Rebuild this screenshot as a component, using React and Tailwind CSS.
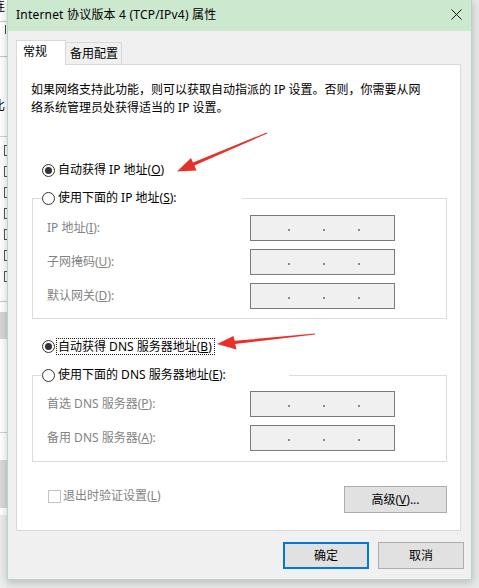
import React from "react";

const Radio = ({ checked }) => (
  <span className="w-[13px] h-[13px] rounded-full border border-[#333333] bg-white flex items-center justify-center shrink-0">
    {checked && <span className="w-[7px] h-[7px] rounded-full bg-[#333333]" />}
  </span>
);

const IpBox = () => (
  <div className="w-[145px] h-[26px] border border-[#7a7a7a] bg-[#f0f0f0] flex items-center">
    <span className="ml-[37px] mt-[3px] w-[2px] h-[2px] bg-[#8a8a8a]" />
    <span className="ml-[33px] mt-[3px] w-[2px] h-[2px] bg-[#8a8a8a]" />
    <span className="ml-[33px] mt-[3px] w-[2px] h-[2px] bg-[#8a8a8a]" />
  </div>
);

const Row = ({ k, pre, post }) => (
  <div className="flex items-center h-[26px]">
    <div className="w-[203px] text-[#838383] text-[12px] leading-[16px]">
      {pre}
      <span className="underline">{k}</span>
      {post}
    </div>
    <IpBox />
  </div>
);

export default function App() {
  return (
    <div className="w-[479px] h-[588px] bg-[#e8e8e8] relative flex overflow-hidden font-['Noto_Sans','Noto_Sans_CJK_SC',sans-serif] text-[12px] text-black">
      {/* background window strip */}
      <div className="w-[7px] h-[588px] flex flex-col shrink-0 overflow-hidden">
        <div className="h-[515px] bg-white flex flex-col">
          <div className="h-[14px] overflow-hidden leading-[14px] text-[12px]">
            <span className="block -ml-[7px]">连</span>
          </div>
          <div className="h-[8px] border-b border-[#c8c8c8]" />
          <div className="h-[14px] flex items-center pl-[5px]">
            <span className="w-px h-[9px] bg-[#444]" />
          </div>
          <div className="h-[21px] border-b border-[#c8c8c8]" />
          <div className="h-[14px] mt-[42px] overflow-hidden leading-[14px]">
            <span className="block -ml-[7px]">比</span>
          </div>
          <div className="h-[24px] border-b border-[#d0d0d0]" />
          <div className="flex flex-col gap-[10px] mt-[8px] pl-[4px]">
            <span className="w-[6px] h-[11px] border border-[#555]" />
            <span className="w-[6px] h-[11px] border border-[#555]" />
            <span className="w-[6px] h-[11px] border border-[#555]" />
            <span className="w-[6px] h-[11px] border border-[#555]" />
            <span className="w-[6px] h-[11px] border border-[#555]" />
            <span className="w-[6px] h-[11px] border border-[#555]" />
            <span className="w-[6px] h-[11px] border border-[#555]" />
          </div>
          <div className="h-[20px] border-b border-[#c8c8c8]" />
          <div className="h-[27px] mt-[10px] bg-[#d6d6d6]" />
          <div className="h-[94px] border-b border-[#d0d0d0]" />
          <div className="h-[48px] mt-[27px] bg-[#dadada]" />
        </div>
        <div className="flex-1 bg-[#ececec]" />
      </div>

      {/* dialog */}
      <div className="w-[465px] h-[580px] flex flex-col bg-[#f0f0f0] border-x border-b border-[#b9d6be] shadow-[0_2px_8px_rgba(0,0,0,0.22)] shrink-0">
        {/* title bar */}
        <div className="h-[31px] bg-[#cce8cf] flex items-center justify-between pl-[8px] pr-[9px] shrink-0">
          <span className="text-[12px] leading-[16px] mb-[1px] tracking-[0.2px]">Internet 协议版本 4 (TCP/IPv4) 属性</span>
          <svg width="11" height="11" viewBox="0 0 11 11" className="mb-[2px]">
            <path d="M0.5 0.5 L10.5 10.5 M10.5 0.5 L0.5 10.5" stroke="#111" strokeWidth="1" />
          </svg>
        </div>

        {/* body */}
        <div className="flex flex-col pl-[8px] pr-[10px] pt-[9px]">
          {/* tabs */}
          <div className="flex items-end h-[24px]">
            <div className="w-[50px] h-[25px] -mb-px bg-white border-x border-t border-[#d9d9d9] pl-[6px] pt-[2px] leading-[18px] relative z-10">
              常规
            </div>
            <div className="w-[56px] h-[22px] bg-[#f0f0f0] border-t border-r border-[#d9d9d9] pl-[4px] pt-[2px] leading-[18px]">
              备用配置
            </div>
          </div>

          {/* panel */}
          <div className="bg-white border border-[#d9d9d9] pt-[16px] pb-[17px] pl-[15px] pr-[13px] flex flex-col">
            <p className="leading-[18px] -ml-px">
              如果网络支持此功能，则可以获取自动指派的 IP 设置。否则，你需要从网
              <br />
              络系统管理员处获得适当的 IP 设置。
            </p>

            <div className="mt-[45px] h-[16px] ml-[10px] flex items-center gap-[3px]">
              <Radio checked />
              <span className="leading-[16px]">
                自动获得 IP 地址(<span className="underline">O</span>)
              </span>
            </div>

            {/* IP group */}
            <div className="mt-[20px] w-[415px] border border-[#dcdcdc] flex flex-col pl-[14px] pb-[9px]">
              <div className="-mt-[9px] -ml-[5px] w-[200px] h-[16px] bg-white flex items-center gap-[3px]">
                <Radio />
                <span className="leading-[16px]">
                  使用下面的 IP 地址(<span className="underline">S</span>):
                </span>
              </div>
              <div className="mt-[9px] flex flex-col gap-[8px]">
                <Row pre="IP 地址(" k="I" post="):" />
                <Row pre="子网掩码(" k="U" post="):" />
                <Row pre="默认网关(" k="D" post="):" />
              </div>
            </div>

            <div className="mt-[19px] h-[16px] ml-[10px] flex items-center gap-[2px]">
              <Radio checked />
              <span className="leading-[15px] outline outline-1 outline-dotted outline-[#222] pl-px pr-[2px]">
                自动获得 DNS 服务器地址(<span className="underline">B</span>)
              </span>
            </div>

            {/* DNS group */}
            <div className="mt-[21px] w-[415px] border border-[#dcdcdc] flex flex-col pl-[14px] pb-[10px]">
              <div className="-mt-[9px] -ml-[5px] w-[247px] h-[16px] bg-white flex items-center gap-[3px]">
                <Radio />
                <span className="leading-[16px]">
                  使用下面的 DNS 服务器地址(<span className="underline">E</span>):
                </span>
              </div>
              <div className="mt-[8px] flex flex-col gap-[8px]">
                <Row pre="首选 DNS 服务器(" k="P" post="):" />
                <Row pre="备用 DNS 服务器(" k="A" post="):" />
              </div>
            </div>

            {/* bottom row */}
            <div className="mt-[24px] w-[415px] flex items-start justify-between">
              <div className="ml-[16px] mt-[2px] flex items-center gap-[2px]">
                <span className="w-[13px] h-[13px] border border-[#c4c4c4] bg-white" />
                <span className="text-[#838383] leading-[16px]">
                  退出时验证设置(<span className="underline">L</span>)
                </span>
              </div>
              <div className="w-[103px] h-[27px] bg-[#e1e1e1] border border-[#adadad] flex items-center justify-center leading-[16px]">
                高级(<span className="underline">V</span>)...
              </div>
            </div>
          </div>

          {/* footer buttons */}
          <div className="mt-[11px] flex justify-end gap-[9px] -mr-[3px]">
            <div className="w-[86px] h-[27px] bg-[#e1e1e1] border-2 border-[#0078d7] flex items-center justify-center leading-[16px]">
              确定
            </div>
            <div className="w-[86px] h-[27px] bg-[#e1e1e1] border border-[#adadad] flex items-center justify-center leading-[16px]">
              取消
            </div>
          </div>
        </div>
      </div>

      {/* annotation arrows */}
      <svg className="absolute left-0 top-0 pointer-events-none" width="479" height="588" viewBox="0 0 479 588">
        <polygon
          points="267.3,133.5 194.4,165.6 196.5,170.5 177,171.5 191,158 193,162.4 266.7,132.5"
          fill="#e8302a"
        />
        <polygon
          points="315,334.6 235.2,344 236.5,349.5 217,344 233.5,336 234.7,340.8 315,333.6"
          fill="#e8302a"
        />
      </svg>
    </div>
  );
}
